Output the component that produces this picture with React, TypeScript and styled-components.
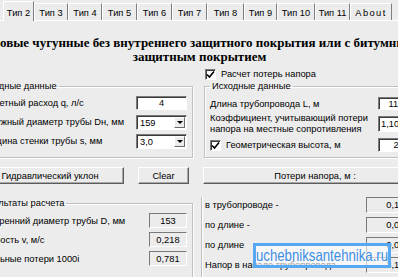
import React from 'react';
import styled, { createGlobalStyle } from 'styled-components';

const GlobalStyle = createGlobalStyle`
  html, body {
    margin: 0;
    padding: 0;
    background: #ececec;
    overflow: hidden;
  }
  #root {
    width: 398px;
    height: 277px;
    overflow: hidden;
  }
`;

const tabs = [
  { label: 'Тип 2', width: 31, active: true },
  { label: 'Тип 3', width: 34 },
  { label: 'Тип 4', width: 34 },
  { label: 'Тип 5', width: 35 },
  { label: 'Тип 6', width: 35 },
  { label: 'Тип 7', width: 35 },
  { label: 'Тип 8', width: 37 },
  { label: 'Тип 9', width: 33 },
  { label: 'Тип 10', width: 38 },
  { label: 'Тип 11', width: 35 },
  { label: 'About', width: 42, spaced: true },
];

const results = [
  { label: 'Внутренний диаметр трубы D, мм', value: '153' },
  { label: 'Скорость v, м/с', value: '0,218' },
  { label: 'Удельные потери 1000i', value: '0,781' },
];

const losses = [
  { label: 'в трубопроводе -', value: '0,125' },
  { label: 'по длине -', value: '0,085' },
  { label: 'по длине', value: '0,040' },
  { label: 'Напор в начале трубопровода -', value: '3,125' },
];

function CheckMark() {
  return (
    <svg width="9" height="9" viewBox="0 0 9 9">
      <path d="M1 4.5 L3.5 7 L8 1.5" fill="none" stroke="#000" strokeWidth="1.6" />
    </svg>
  );
}

function App() {
  return (
    <>
      <GlobalStyle />
      <Window>
        <TabStrip>
          {tabs.map((t) => (
            <Tab key={t.label} $w={t.width} $active={!!t.active} $spaced={!!t.spaced}>
              {t.label}
            </Tab>
          ))}
        </TabStrip>

        <Title>
          <TitleLine>овые чугунные без внутреннего защитного покрытия или с битумным</TitleLine>
          <TitleCenter>защитным покрытием</TitleCenter>
        </Title>

        <Columns $top={4}>
          <LeftCol>
            <GroupBox $pad="4px 5px 9px 8px">
              <Legend $ml={-3}>Исходные данные</Legend>
              <Rows $gap={5}>
                <Row $h={14}>
                  <Label>Расчетный расход q, л/с</Label>
                  <Field readOnly value="4" $w={51} $h={14} $align="center" />
                </Row>
                <Row $h={14}>
                  <Label>Наружный диаметр трубы Dн, мм</Label>
                  <Select>
                    <SelectValue>159</SelectValue>
                    <DropButton />
                  </Select>
                </Row>
                <Row $h={14}>
                  <Label>Толщина стенки трубы s, мм</Label>
                  <Select>
                    <SelectValue>3,0</SelectValue>
                    <DropButton />
                  </Select>
                </Row>
              </Rows>
            </GroupBox>
          </LeftCol>

          <RightCol>
            <CheckRow>
              <CheckBox>
                <CheckMark />
              </CheckBox>
              Расчет потерь напора
            </CheckRow>
            <GroupBox $pad="5px 0 5px 5px" $ml={3}>
              <Legend $ml={0}>Исходные данные</Legend>
              <Rows $gap={6}>
                <Row $h={13} $start>
                  <FixedLabel $w={168}>Длина трубопровода L, м</FixedLabel>
                  <Field readOnly value="110" $w={36} $h={13} $align="center" />
                </Row>
                <Row $h={16} $start>
                  <FixedLabel $w={168} $two>
                    Коэффициент, учитывающий потери
                    <br />
                    напора на местные сопротивления
                  </FixedLabel>
                  <Field readOnly value="1,10" $w={50} $h={16} $align="left" />
                </Row>
                <Row $h={14} $start>
                  <FixedLabel $w={168}>
                    <InlineCheck>
                      <CheckBox>
                        <CheckMark />
                      </CheckBox>
                      Геометрическая высота, м
                    </InlineCheck>
                  </FixedLabel>
                  <Field readOnly value="2" $w={36} $h={14} $align="center" />
                </Row>
              </Rows>
            </GroupBox>
          </RightCol>
        </Columns>

        <Columns $top={9}>
          <ButtonGroup>
            <Button $w={148}>Гидравлический уклон</Button>
            <Button $w={51}>Clear</Button>
          </ButtonGroup>
          <ButtonGroup $pl={2}>
            <Button $w={224}>Потери напора, м :</Button>
          </ButtonGroup>
        </Columns>

        <Columns $top={13}>
          <GroupBox $pad="4px 5px 12px 8px">
            <Legend $ml={-2}>Результаты расчета</Legend>
            <Rows $gap={4}>
              {results.map((r) => (
                <Row key={r.label} $h={15}>
                  <Label>{r.label}</Label>
                  <Output $w={38}>{r.value}</Output>
                </Row>
              ))}
            </Rows>
          </GroupBox>

          <LossPanel>
            <Rows $gap={4}>
              {losses.map((r) => (
                <Row key={r.label} $h={16} $start>
                  <FixedLabel $w={161}>{r.label}</FixedLabel>
                  <Output $w={64}>{r.value}</Output>
                </Row>
              ))}
            </Rows>
          </LossPanel>
        </Columns>

        <Watermark>
          <WatermarkText>uchebniksantehnika.ru</WatermarkText>
        </Watermark>
      </Window>
    </>
  );
}

const Window = styled.div`
  position: relative;
  width: 459px;
  height: 277px;
  margin-left: -30px;
  font-family: 'Liberation Sans', Arial, sans-serif;
  font-size: 9.3px;
  color: #000;
`;

const TabStrip = styled.div`
  display: flex;
  align-items: flex-end;
  height: 20px;
  padding-left: 33px;
  border-bottom: 1px solid #fff;
`;

const Tab = styled.div<{ $w: number; $active: boolean; $spaced: boolean }>`
  box-sizing: border-box;
  flex: none;
  width: ${({ $w }) => $w}px;
  height: ${({ $active }) => ($active ? 20 : 17)}px;
  margin-bottom: ${({ $active }) => ($active ? -1 : 0)}px;
  padding-top: 2px;
  display: flex;
  align-items: center;
  justify-content: center;
  white-space: nowrap;
  background: #ececec;
  border-top: 1px solid #fff;
  border-left: 1px solid #fff;
  border-right: 1px solid #7f7f7f;
  letter-spacing: ${({ $spaced }) => ($spaced ? '1.4px' : '0')};
`;

const Title = styled.div`
  margin-top: 15px;
  font-family: 'Liberation Serif', 'Times New Roman', serif;
  font-weight: bold;
  font-size: 13px;
  line-height: 14px;
`;

const TitleLine = styled.div`
  padding-left: 30px;
  white-space: nowrap;
`;

const TitleCenter = styled.div`
  text-align: center;
`;

const Columns = styled.div<{ $top: number }>`
  display: grid;
  grid-template-columns: 223px 228px;
  column-gap: 8px;
  margin-top: ${({ $top }) => $top}px;
  align-items: start;
`;

const LeftCol = styled.div`
  padding-top: 12px;
`;

const RightCol = styled.div`
  display: flex;
  flex-direction: column;
`;

const GroupBox = styled.fieldset<{ $pad: string; $ml?: number }>`
  box-sizing: border-box;
  min-width: 0;
  margin: 0 0 0 ${({ $ml }) => $ml || 0}px;
  padding: ${({ $pad }) => $pad};
  border: 1px solid #c0c0c0;
  box-shadow: 1px 1px 0 #fff, inset 1px 1px 0 #fff;
`;

const Legend = styled.legend<{ $ml: number }>`
  margin-left: ${({ $ml }) => $ml}px;
  padding: 0 2px;
  font-size: 9.3px;
  line-height: 12px;
  white-space: nowrap;
`;

const Rows = styled.div<{ $gap: number }>`
  display: flex;
  flex-direction: column;
  gap: ${({ $gap }) => $gap}px;
`;

const Row = styled.div<{ $h: number; $start?: boolean }>`
  display: flex;
  align-items: center;
  justify-content: ${({ $start }) => ($start ? 'flex-start' : 'space-between')};
  height: ${({ $h }) => $h}px;
`;

const Label = styled.span`
  white-space: nowrap;
`;

const FixedLabel = styled.span<{ $w: number; $two?: boolean }>`
  flex: none;
  width: ${({ $w }) => $w}px;
  white-space: nowrap;
  line-height: ${({ $two }) => ($two ? '11px' : 'normal')};
`;

const Field = styled.input<{ $w: number; $h: number; $align: string }>`
  box-sizing: border-box;
  flex: none;
  margin: 0;
  padding: 0 2px;
  width: ${({ $w }) => $w}px;
  height: ${({ $h }) => $h}px;
  font: inherit;
  color: #000;
  text-align: ${({ $align }) => $align};
  background: #fff;
  border: 1px solid;
  border-color: #7a7a7a #fff #fff #7a7a7a;
  box-shadow: inset 1px 1px 0 #3a3a3a;
  outline: none;
`;

const Select = styled.div`
  box-sizing: border-box;
  display: flex;
  align-items: center;
  justify-content: space-between;
  width: 51px;
  height: 15px;
  padding: 1px 1px 1px 3px;
  background: #fff;
  border: 1px solid;
  border-color: #7a7a7a #fff #fff #7a7a7a;
  box-shadow: inset 1px 1px 0 #3a3a3a;
`;

const SelectValue = styled.span`
  padding-top: 1px;
`;

const DropButton = styled.span`
  box-sizing: border-box;
  position: relative;
  width: 11px;
  height: 11px;
  background: #ececec;
  border: 1px solid;
  border-color: #fff #6a6a6a #6a6a6a #fff;

  &::after {
    content: '';
    position: absolute;
    left: 2px;
    top: 3px;
    border-left: 3px solid transparent;
    border-right: 3px solid transparent;
    border-top: 3px solid #000;
  }
`;

const CheckRow = styled.label`
  display: flex;
  align-items: center;
  height: 12px;
  padding-left: 4px;
  gap: 5px;
  white-space: nowrap;
`;

const InlineCheck = styled.span`
  display: flex;
  align-items: center;
  gap: 5px;
`;

const CheckBox = styled.span`
  box-sizing: border-box;
  flex: none;
  display: flex;
  align-items: center;
  justify-content: center;
  width: 11px;
  height: 11px;
  background: #fff;
  border: 1px solid;
  border-color: #7a7a7a #fff #fff #7a7a7a;
  box-shadow: inset 1px 1px 0 #3a3a3a;
`;

const ButtonGroup = styled.div<{ $pl?: number }>`
  display: flex;
  gap: 14px;
  padding-left: ${({ $pl }) => ($pl === undefined ? 6 : $pl)}px;
`;

const Button = styled.button<{ $w: number }>`
  box-sizing: border-box;
  flex: none;
  width: ${({ $w }) => $w}px;
  height: 17px;
  padding: 0;
  font: inherit;
  color: #000;
  background: #ececec;
  border: 1px solid;
  border-color: #fff #5c5c5c #5c5c5c #fff;
  box-shadow: inset -1px -1px 0 #a8a8a8;
  white-space: nowrap;
`;

const Output = styled.div<{ $w: number }>`
  box-sizing: border-box;
  flex: none;
  width: ${({ $w }) => $w}px;
  height: 100%;
  display: flex;
  align-items: center;
  justify-content: center;
  background: #ececec;
  border: 1px solid;
  border-color: #7a7a7a #fff #fff #7a7a7a;
  white-space: nowrap;
`;

const LossPanel = styled.div`
  padding-left: 3px;
  padding-bottom: 10px;
  border-left: 1px solid #c0c0c0;
  box-shadow: inset 1px 0 0 #fff;
`;

const Watermark = styled.div`
  position: absolute;
  left: 283px;
  top: 243px;
  box-sizing: border-box;
  width: 138px;
  height: 25px;
  border: 3px solid #56a8f2;
  background: rgba(255, 255, 255, 0.6);
  overflow: hidden;
`;

const WatermarkText = styled.div`
  font-family: 'Liberation Sans', Arial, sans-serif;
  font-size: 16.5px;
  line-height: 19px;
  color: #3f8fe3;
  white-space: nowrap;
  transform: scaleX(0.8);
  transform-origin: left center;
`;

export default App;
